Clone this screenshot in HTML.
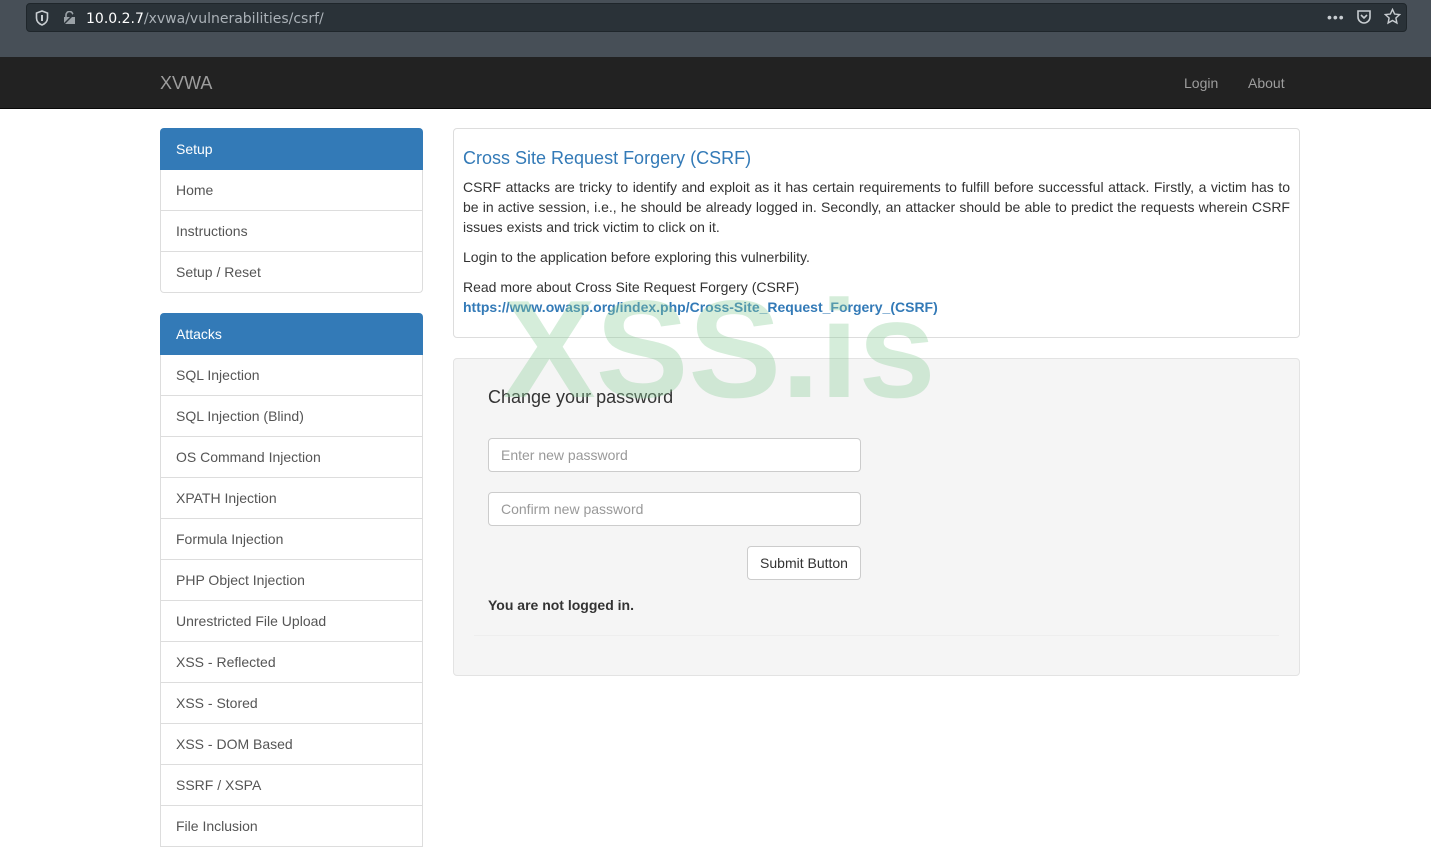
<!DOCTYPE html>
<html><head><meta charset="utf-8"><style>
*{box-sizing:border-box}
body{margin:0;width:1431px;height:847px;overflow:hidden;background:#fff;font-family:"Liberation Sans",Arial,sans-serif;font-size:14px;color:#333;position:relative}
.chrome{position:absolute;left:0;top:0;width:1431px;height:57px;background:#474f57}
.url{position:absolute;left:26px;top:3px;width:1381px;height:29px;background:#2a3238;border-radius:4px;border:1px solid #1f262b}
.url .t{position:absolute;left:59px;top:6px;color:#fff;font-family:"DejaVu Sans",sans-serif;font-size:14px}
.url .t span{color:#aab1b7}
.nav{position:absolute;left:0;top:57px;width:1431px;height:52px;background:#222;border-bottom:1px solid #080808}
.nav .b{position:absolute;left:160px;top:16px;color:#9d9d9d;font-size:18px}
.nav .l{position:absolute;top:18px;color:#9d9d9d;font-size:14px}
.list{position:absolute;left:160px;width:263px}
.list div{height:41px;border:1px solid #ddd;border-top:none;padding:12px 15px 0;color:#555}
.list div.h{background:#337ab7;color:#fff;border-color:#337ab7;height:42px;padding:13px 15px 0;border-radius:4px 4px 0 0}
.panel{position:absolute;left:453px;top:128px;width:847px;height:210px;border:1px solid #ddd;border-radius:4px;padding:0 9px 0 9px}
.panel h3{margin:19px 0 8px;font-weight:normal;font-size:18px;color:#337ab7}
.panel p{margin:0 0 10px;line-height:20px;text-align:justify}
.panel a{color:#337ab7;font-weight:bold;text-decoration:none}
.well{position:absolute;left:453px;top:358px;width:847px;height:318px;background:#f5f5f5;border:1px solid #e3e3e3;border-radius:4px}
.inp{position:absolute;left:34px;width:373px;height:34px;background:#fff;border:1px solid #ccc;border-radius:4px;padding:8px 12px 0 12px;color:#999}
.btn{position:absolute;left:293px;top:187px;width:114px;height:34px;background:#fff;border:1px solid #ccc;border-radius:4px;text-align:center;padding-top:8px;color:#333}
.wm{position:absolute;left:503px;top:280px;font-size:139px;font-weight:bold;color:rgba(140,205,155,0.37);letter-spacing:0;line-height:1}
</style></head><body>
<div class="chrome"><div class="url">
<svg style="position:absolute;left:8px;top:6px" width="14" height="16" viewBox="0 0 14 16"><path d="M7 1L1.5 3v5c0 3.5 2.5 5.8 5.5 7 3-1.2 5.5-3.5 5.5-7V3z" fill="none" stroke="#c8cdd1" stroke-width="1.6"/><rect x="6" y="5" width="2" height="6" fill="#c8cdd1"/></svg>
<svg style="position:absolute;left:36px;top:7px" width="14" height="14" viewBox="0 0 14 14"><rect x="1" y="6" width="11" height="7" fill="#9aa1a6"/><path d="M3 6V4a3.5 3.5 0 017 0" fill="none" stroke="#9aa1a6" stroke-width="1.6"/><path d="M1 13L13 1" stroke="#2a3238" stroke-width="1.5"/></svg>
<div class="t" style="top:7px">10.0.2.7<span>/xvwa/vulnerabilities/csrf/</span></div>
<div style="position:absolute;left:1300px;top:5px;color:#c8cdd1;font-size:14px;letter-spacing:1px">•••</div>
<svg style="position:absolute;left:1329px;top:5px" width="16" height="16" viewBox="0 0 16 16"><path d="M2 2h12v6a6 6 0 01-12 0z" fill="none" stroke="#c8cdd1" stroke-width="1.6"/><path d="M5 6l3 3 3-3" fill="none" stroke="#c8cdd1" stroke-width="1.6"/></svg>
<svg style="position:absolute;left:1357px;top:4px" width="17" height="17" viewBox="0 0 24 24"><path d="M12 2l3 6.5 7 .8-5.2 4.8 1.4 7L12 17.6 5.8 21.1l1.4-7L2 9.3l7-.8z" fill="none" stroke="#c8cdd1" stroke-width="2"/></svg>
</div></div>
<div class="nav"><div class="b">XVWA</div><div class="l" style="left:1184px">Login</div><div class="l" style="left:1248px">About</div></div>
<div class="list" style="top:128px"><div class="h">Setup</div><div>Home</div><div>Instructions</div><div style="border-radius:0 0 4px 4px">Setup / Reset</div></div>
<div class="list" style="top:313px"><div class="h">Attacks</div><div>SQL Injection</div><div>SQL Injection (Blind)</div><div>OS Command Injection</div><div>XPATH Injection</div><div>Formula Injection</div><div>PHP Object Injection</div><div>Unrestricted File Upload</div><div>XSS - Reflected</div><div>XSS - Stored</div><div>XSS - DOM Based</div><div>SSRF / XSPA</div><div>File Inclusion</div></div>
<div class="panel"><h3>Cross Site Request Forgery (CSRF)</h3>
<p>CSRF attacks are tricky to identify and exploit as it has certain requirements to fulfill before successful attack. Firstly, a victim has to be in active session, i.e., he should be already logged in. Secondly, an attacker should be able to predict the requests wherein CSRF issues exists and trick victim to click on it.</p>
<p>Login to the application before exploring this vulnerbility.</p>
<p>Read more about Cross Site Request Forgery (CSRF)<br><a>https://www.owasp.org/index.php/Cross-Site_Request_Forgery_(CSRF)</a></p></div>
<div class="well">
<div style="position:absolute;left:34px;top:28px;font-size:18px;color:#333">Change your password</div>
<div class="inp" style="top:79px">Enter new password</div>
<div class="inp" style="top:133px">Confirm new password</div>
<div class="btn">Submit Button</div>
<div style="position:absolute;left:34px;top:238px;font-weight:bold">You are not logged in.</div>
<div style="position:absolute;left:20px;right:20px;top:276px;border-top:1px solid #eee"></div>
</div>
<div class="wm">XSS.is</div>
</body></html>
